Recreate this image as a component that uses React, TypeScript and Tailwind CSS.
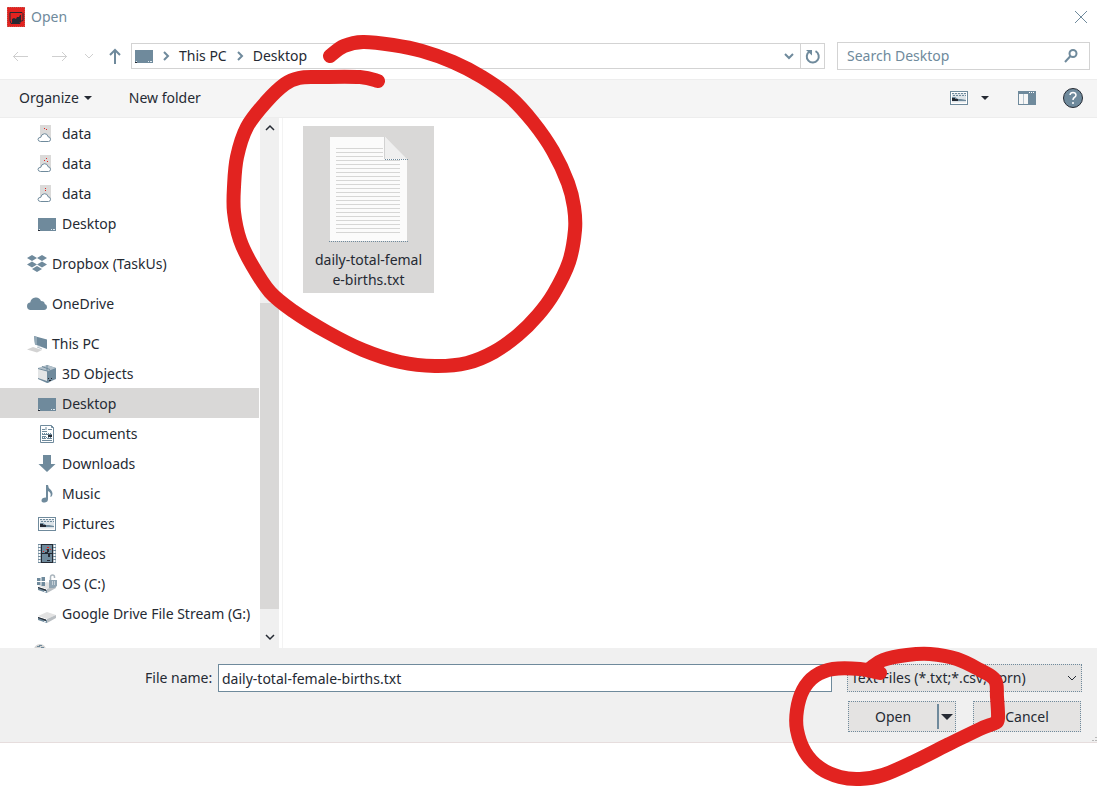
import type { ReactNode } from "react";

const BLUE = "#6f8a9c";
const INK = "#252a33";
const RED = "#e22320";

type Point = [number, number];

function smooth(points: Point[]) {
  let d = `M${points[0][0]} ${points[0][1]}`;
  for (let i = 0; i < points.length - 1; i++) {
    const p0 = points[i - 1] ?? points[i];
    const p1 = points[i];
    const p2 = points[i + 1];
    const p3 = points[i + 2] ?? p2;
    d += `C${p1[0] + (p2[0] - p0[0]) / 6} ${p1[1] + (p2[1] - p0[1]) / 6} ${p2[0] - (p3[0] - p1[0]) / 6} ${p2[1] - (p3[1] - p1[1]) / 6} ${p2[0]} ${p2[1]}`;
  }
  return d;
}

const fileCircle: Point[] = [
  [330, 56], [344, 46], [363, 42], [393, 45], [422, 51], [453, 62], [482, 77], [510, 97], [533, 122],
  [553, 151], [568, 183], [574, 207], [575, 230], [569, 262], [554, 293], [538, 315], [518, 335],
  [494, 352], [467, 363], [435, 366], [400, 362], [363, 350], [327, 332], [293, 311], [270, 292],
  [252, 265], [240, 240], [234, 212], [234, 187], [237, 157], [247, 127], [266, 102], [285, 84],
  [299, 78], [317, 77], [360, 77], [378, 81],
];

const openCircle: Point[] = [
  [880, 673], [860, 669], [833, 669], [815, 676], [803, 690], [797, 710], [797, 730], [805, 752],
  [820, 768], [840, 777], [860, 779], [883, 775], [913, 762], [947, 745], [980, 729], [995, 723],
  [998, 718], [997, 697], [995, 680], [980, 670], [957, 659], [930, 654], [907, 655], [883, 660],
  [872, 667],
];

function Icon({ w = 20, h = 20, children }: { w?: number; h?: number; children: ReactNode }) {
  return (
    <svg width={w} height={h} viewBox={`0 0 ${w} ${h}`} fill="none" aria-hidden="true" className="shrink-0 overflow-visible">
      {children}
    </svg>
  );
}

function AppIcon() {
  return (
    <Icon>
      <rect x="1" y="0" width="18" height="20" fill={RED} />
      <path d="M1 .5h18M1 19.500h18M1.500 0v20M18.500 0v20" stroke="#c9564f" strokeDasharray="1 1" />
      <path d="M4 5.500h12l1 1v7l-3 1v2H5l-1-3z" stroke={INK} />
      <path d="M6 15v-3l2-1 2 1 1-2h2l1-2h1v6l-2 2H6z" fill={INK} />
    </Icon>
  );
}

function DesktopIcon() {
  return (
    <Icon>
      <rect x="1" y="4" width="18" height="13" fill={BLUE} />
      <path d="M1 16.500h2" stroke={INK} />
      <path d="M2 15.500h1M14 15.500h1M16 15.500h2" stroke="#dfe8ee" />
    </Icon>
  );
}

function DataIcon({ variant }: { variant: number }) {
  const dots = ["M7 4.500h1M9 5.500h1", "M9 4.500h1M7 6.500h1M10 7.500h1", "M8 4.500h1M8 6.500h1"][variant];
  return (
    <Icon>
      <rect x="3" y="1" width="11" height="15" fill="#dbdad9" />
      <path d={dots} stroke={RED} />
      <path d="M3.500 17.500Q1 17.300 1 15.300 1 13.500 3.800 13.300 4.300 10 7.500 9.700 10.500 9.600 11 12.700 13.500 13 13.500 15.300 13.500 17.500 11.500 17.500z" fill="#fff" stroke={BLUE} />
    </Icon>
  );
}

function DropboxIcon() {
  return (
    <Icon>
      <path d="M0 4l5-3 5 3-5 3zM10 4l5-3 5 3-5 3zM0 10.500l5-3 5 3-5 3zM10 10.500l5-3 5 3-5 3zM5 15l5-3 5 3-5 3z" fill={BLUE} />
    </Icon>
  );
}

function OneDriveIcon() {
  return (
    <Icon>
      <path d="M3 16q-3-.6-3-4 .2-3.200 3.200-3.500Q4 4 8.500 3.500q4-.3 5.500 3.500 3.500 0 3.800 3 2.200.6 2.200 3 0 2.600-3 3z" fill={BLUE} />
    </Icon>
  );
}

function ThisPcIcon() {
  return (
    <Icon>
      <path d="M7 2l13 3.500V15L8 10.500z" fill={BLUE} />
      <path d="M7 2l3 1v8l-2-1z" fill="#93a8b6" />
      <path d="M0 15.500l6-2.500 9 3-5 2.500z" fill="#d3d3d3" />
      <path d="M10 13l5 2M12 11.500v2" stroke="#b4c0c9" />
    </Icon>
  );
}

function ObjectsIcon() {
  return (
    <Icon>
      <path d="M1 4l9-3v17l-9-3z" fill="#e3e5e6" />
      <path d="M10 1l9 3v11l-9 4z" fill={BLUE} />
      <path d="M1 4l9-3 9 3-8 3z" fill="#b3c1cb" />
      <path d="M1 4.500l9 2.500M10 1v6M5 2.500l8 3" stroke={BLUE} />
      <path d="M1 15l9 4 3-1v-2l-3 1-9-3z" fill={BLUE} />
      <path d="M11 14.500h1M12 16.500h2M14 14.500h1" stroke={INK} />
    </Icon>
  );
}

function DocumentsIcon() {
  return (
    <Icon>
      <path d="M3.500 1.500h11l2 2v15h-13z" fill="#fff" stroke={BLUE} />
      <path d="M14.500 1.500v2h2M5 7.500h5M5 5.500h3M9 3v3M11 5.500h4M5 16.500h10M5 14.500h4M10 14.500h5M5 12.500h4M5 10.500h10" stroke={BLUE} />
      <path d="M5 9.500h10M5 13.500h10" stroke={BLUE} strokeDasharray="1 1" />
      <path d="M11 12h4" stroke={INK} strokeWidth="2" />
    </Icon>
  );
}

function DownloadsIcon() {
  return (
    <Icon>
      <path d="M6 1h8v9h4.500L10 18 1.500 10H6z" fill={BLUE} />
    </Icon>
  );
}

function MusicIcon() {
  return (
    <Icon>
      <path d="M9 1h2q0 3 3 5 3 4 0 7-1 0-.5-1 1-3-2.500-5v8q0 3-3 3.500-3.500.3-3.500-2 0-3 4.500-3z" fill={BLUE} />
    </Icon>
  );
}

function PicturesIcon() {
  return (
    <Icon>
      <rect x="1.500" y="3.500" width="17" height="13" fill="#fff" stroke={BLUE} />
      <rect x="3" y="5" width="14" height="10" fill="#dde4e9" />
      <path d="M3 5.500h14M4 7.500h13" stroke={BLUE} strokeDasharray="2 1" />
      <path d="M3 9h3l3 2h3l5 1v1H3z" fill={BLUE} />
      <path d="M3 10h3v1h3v2H3z" fill={INK} />
      <path d="M3 14h14v1H3z" fill="#f1f1f1" />
    </Icon>
  );
}

function VideosIcon() {
  return (
    <Icon>
      <rect x="1" y="0" width="18" height="19" fill={BLUE} />
      <path d="M2.500 1v17M17.500 1v17" stroke="#fff" strokeWidth="2" strokeDasharray="2 1" />
      <rect x="4.500" y=".5" width="11" height="18" fill={BLUE} stroke={INK} />
      <path d="M5 9h10v1H5zM10 5h2v3h-2zM11 10h2v3h-2zM10 16h3v1h-3zM8 8h3v1H8z" fill={INK} />
      <path d="M10 3.500h2M9 5.500h1M13 5.500h1M6 7.500h1" stroke={RED} />
    </Icon>
  );
}

function Drive() {
  return (
    <g transform="translate(0 1)">
      <path d="M1 11l9-4 9 3-9 4z" fill="#e2e2e2" />
      <path d="M10 14l9-4v3l-9 5z" fill="#b9bec2" />
      <path d="M1 12l9 3V18l-9-3z" fill={BLUE} />
      <path d="M1 12l8 2.500v1.500l-8-3z" fill={INK} />
      <path d="M7 16.500h2" stroke="#dfe8ee" />
    </g>
  );
}

function OsDriveIcon() {
  return (
    <Icon>
      <Drive />
      <path d="M0 4h3.500v3H0zM4.500 3H8v4H4.500zM0 8h3.500v3H0zM4.500 8H8v4H4.500z" fill={BLUE} />
      <path d="M13.500 6V3q.2-2 2-2 2 0 2 2v1" stroke="#aab5bd" strokeWidth="1.500" />
      <path d="M12 6h8v6l-3 2h-5z" fill="#90a4b2" />
      <path d="M15 8h3M15 10h3" stroke="#fff" strokeDasharray="1 1" />
    </Icon>
  );
}

function DriveIcon() {
  return (
    <Icon>
      <Drive />
    </Icon>
  );
}

function NetworkDriveIcon() {
  return (
    <Icon>
      <circle cx="3" cy="16" r="6" fill="#d3d3d3" />
      <path d="M0 12.500h3M2 11.500h3M4 13.500h3" stroke={BLUE} />
    </Icon>
  );
}

function Chevron({ dir, color = INK, w = 2 }: { dir: "up" | "down" | "right"; color?: string; w?: number }) {
  const d = { up: "M2 8l4-4 4 4", down: "M2 4l4 4 4-4", right: "M4 2l4 4-4 4" }[dir];
  return (
    <Icon w={12} h={12}>
      <path d={d} stroke={color} strokeWidth={w} />
    </Icon>
  );
}

function Caret() {
  return (
    <Icon w={12} h={12}>
      <path d="M2 4h8L6 8z" fill={INK} />
    </Icon>
  );
}

function TextFileIcon() {
  const lines = Array.from({ length: 22 }, (_, i) => 12 + i * 4);
  return (
    <Icon w={79} h={106}>
      <path d="M1 1h55l22 23v81H1z" fill="#fbfbfb" />
      {lines.map((y) => (
        <path key={y} d={`M7 ${y + 0.5}H${y < 24 ? 54 : 71}`} stroke="#d6d6d5" />
      ))}
      <path d="M56 1l22 22H56z" fill="#efefef" />
      <path d="M55.500 1v22" stroke="#d2d2d2" />
      <path d="M56 23.500h23M0 105.500h79" stroke={BLUE} strokeDasharray="1 1" />
    </Icon>
  );
}

type Entry = { label: string; icon: ReactNode; selected?: boolean };

const quickAccess: Entry[] = [
  { label: "data", icon: <DataIcon variant={0} /> },
  { label: "data", icon: <DataIcon variant={1} /> },
  { label: "data", icon: <DataIcon variant={2} /> },
  { label: "Desktop", icon: <DesktopIcon /> },
];

const pcEntries: Entry[] = [
  { label: "3D Objects", icon: <ObjectsIcon /> },
  { label: "Desktop", icon: <DesktopIcon />, selected: true },
  { label: "Documents", icon: <DocumentsIcon /> },
  { label: "Downloads", icon: <DownloadsIcon /> },
  { label: "Music", icon: <MusicIcon /> },
  { label: "Pictures", icon: <PicturesIcon /> },
  { label: "Videos", icon: <VideosIcon /> },
  { label: "OS (C:)", icon: <OsDriveIcon /> },
  { label: "Google Drive File Stream (G:)", icon: <DriveIcon /> },
  { label: "", icon: <NetworkDriveIcon /> },
];

function TreeRow({ entry, nested = false }: { entry: Entry; nested?: boolean }) {
  return (
    <li>
      <button
        type="button"
        aria-label={entry.label || "Network drive"}
        className={`flex h-[30px] w-full items-center gap-[5px] whitespace-nowrap pt-px text-left ${nested ? "pl-[37px]" : "pl-[27px]"} ${entry.selected ? "bg-[#d9d8d7]" : ""}`}
      >
        {entry.icon}
        {entry.label}
      </button>
    </li>
  );
}

function TitleBar() {
  return (
    <header className="flex h-[34px] items-center gap-[5px] pb-px pl-[6px] pr-2 text-[#6f8a9c]">
      <AppIcon />
      <h1 className="flex-1">Open</h1>
      <button type="button" aria-label="Close">
        <Icon w={16} h={16}>
          <path d="M2 2l12 12M14 2L2 14" stroke={BLUE} />
        </Icon>
      </button>
    </header>
  );
}

function AddressRow() {
  return (
    <div className="flex h-[45px] items-center pb-px pl-3 pr-[7px]">
      <nav className="flex items-center" aria-label="History">
        <button type="button" aria-label="Back">
          <Icon w={18} h={16}>
            <path d="M1 8.500h15M6 4L1.500 8.500 6 13" stroke="#cfcfcf" />
          </Icon>
        </button>
        <button type="button" aria-label="Forward" className="ml-[22px]">
          <Icon w={18} h={16}>
            <path d="M0 8.500h15M10 4l4.500 4.500L10 13" stroke="#cfcfcf" />
          </Icon>
        </button>
        <button type="button" aria-label="Recent locations" className="ml-[13px]">
          <Chevron dir="down" color="#cfcfcf" w={1} />
        </button>
        <button type="button" aria-label="Up" className="ml-3">
          <Icon w={16} h={16}>
            <path d="M8 16V2M3 7l5-5 5 5" stroke={BLUE} strokeWidth="2" />
          </Icon>
        </button>
      </nav>
      <div className="ml-2 flex h-[26px] flex-1 items-center border border-[#d3d3d3] pl-[2px]">
        <DesktopIcon />
        <span className="ml-[6px]"><Chevron dir="right" color={BLUE} /></span>
        <button type="button" className="ml-[7px]">This PC</button>
        <span className="ml-[7px]"><Chevron dir="right" color={BLUE} /></span>
        <button type="button" className="ml-[7px]">Desktop</button>
        <button type="button" aria-label="Previous locations" className="ml-auto mr-[5px]">
          <Chevron dir="down" color={BLUE} />
        </button>
        <button type="button" aria-label="Refresh" className="flex h-full w-6 items-center justify-center border-l border-[#d3d3d3]">
          <Icon w={16} h={16}>
            <path d="M10.500 3.200A6 6 0 1 1 4.500 3.500" stroke={BLUE} strokeWidth="2" />
            <path d="M1 2h6v5.500z" fill={BLUE} />
          </Icon>
        </button>
      </div>
      <label className="ml-3 flex h-7 w-[253px] items-center border border-[#d3d3d3] pl-[9px] pr-[10px]">
        <input
          type="search"
          aria-label="Search Desktop"
          placeholder="Search Desktop"
          className="min-w-0 flex-1 bg-transparent outline-none placeholder:text-[#6f8a9c]"
        />
        <Icon w={16} h={16}>
          <circle cx="10" cy="5.500" r="3.500" stroke={BLUE} strokeWidth="2" />
          <path d="M7.500 8L2 14" stroke={BLUE} strokeWidth="2" />
        </Icon>
      </label>
    </div>
  );
}

function Toolbar() {
  return (
    <div className="flex h-[39px] items-center border-y border-[#ededed] bg-[#f5f5f5] pb-px pl-[19px] pr-[13px]">
      <button type="button" className="flex items-center gap-[3px]">
        Organize <Caret />
      </button>
      <button type="button" className="ml-[35px]">New folder</button>
      <button type="button" aria-label="Change view" className="ml-auto flex items-center gap-[10px]">
        <PicturesIcon />
        <Caret />
      </button>
      <button type="button" aria-label="Preview pane" className="ml-[26px]">
        <Icon>
          <path d="M1 3h18v14H1z" fill={BLUE} />
          <path d="M2 6h9v10H2z" fill="#f7f7f7" />
          <path d="M6.500 6v10" stroke="#b8c5ce" />
          <path d="M12 4.500h6" stroke="#fff" strokeDasharray="1 1" />
        </Icon>
      </button>
      <button type="button" aria-label="Help" className="ml-[25px]">
        <Icon w={22} h={22}>
          <circle cx="11" cy="11" r="9.500" fill={BLUE} stroke={INK} />
          <path d="M8 8q.3-2.500 3-2.500t3 2.500q0 1.500-1.700 2.500-1.300.8-1.300 2.500M11 15v2" stroke="#fff" strokeWidth="1.500" />
        </Icon>
      </button>
    </div>
  );
}

function Sidebar() {
  return (
    <aside className="flex w-[279px] shrink-0">
      <nav aria-label="Folders" className="flex flex-1 flex-col gap-[10px] overflow-hidden">
        <ul>
          {quickAccess.map((entry, i) => (
            <TreeRow key={i} entry={entry} nested />
          ))}
        </ul>
        <ul>
          <TreeRow entry={{ label: "Dropbox (TaskUs)", icon: <DropboxIcon /> }} />
        </ul>
        <ul>
          <TreeRow entry={{ label: "OneDrive", icon: <OneDriveIcon /> }} />
        </ul>
        <ul>
          <TreeRow entry={{ label: "This PC", icon: <ThisPcIcon /> }} />
          {pcEntries.map((entry, i) => (
            <TreeRow key={i} entry={entry} nested />
          ))}
        </ul>
      </nav>
      <div className="ml-px flex w-[19px] flex-col items-center bg-[#f0f0f0]">
        <button type="button" aria-label="Scroll up" className="flex h-5 items-center"><Chevron dir="up" w={1.5} /></button>
        <div className="mt-[165px] h-[306px] w-full bg-[#d9d8d7]" />
        <button type="button" aria-label="Scroll down" className="mb-[5px] mt-auto"><Chevron dir="down" w={1.5} /></button>
      </div>
    </aside>
  );
}

function Footer() {
  return (
    <footer className="flex flex-col gap-[9px] border-b border-[#e6dddd] bg-[#f0f0f0] pb-[10px] pl-[145px] pr-[15px] pt-4">
      <div className="flex items-center">
        <label htmlFor="file-name" className="w-[73px] whitespace-nowrap">File name:</label>
        <input
          id="file-name"
          defaultValue="daily-total-female-births.txt"
          className="h-7 min-w-0 flex-1 border border-[#6f8a9c] bg-white px-[3px] outline-none"
        />
        <div className="ml-[15px] grid w-[235px] items-center">
          <select
            aria-label="File type"
            className="col-start-1 row-start-1 h-7 appearance-none border border-dotted border-[#6f8a9c] bg-[#e4e3e2] px-[3px] outline-none"
          >
            <option>Text Files (*.txt;*.csv;*.prn)</option>
          </select>
          <span className="pointer-events-none col-start-1 row-start-1 mr-1 justify-self-end">
            <Chevron dir="down" w={1} />
          </span>
        </div>
      </div>
      <div className="flex justify-end gap-[17px] pr-px">
        <div className="flex h-[31px] w-[108px] items-center border border-dotted border-[#6f8a9c] bg-[#e4e3e2]">
          <button type="button" className="flex-1">Open</button>
          <button type="button" aria-label="Open options" className="flex h-[25px] w-[18px] items-center justify-center border-l-2 border-[#6f8a9c]">
            <Icon w={12} h={12}>
              <path d="M0 3h12L6 9z" fill={INK} />
            </Icon>
          </button>
        </div>
        <button type="button" className="h-[31px] w-[108px] border border-dotted border-[#6f8a9c] bg-[#e4e3e2]">
          Cancel
        </button>
      </div>
    </footer>
  );
}

export default function App() {
  return (
    <div className="relative min-h-screen overflow-hidden bg-white font-['Noto_Sans','Open_Sans',sans-serif] text-[14px] leading-5 text-[#252a33]">
      <TitleBar />
      <AddressRow />
      <Toolbar />
      <main className="flex h-[530px]">
        <Sidebar />
        <section aria-label="Files" className="ml-[3px] flex-1 border-l border-[#f3f3f3] pl-5 pt-2">
          <button type="button" className="flex w-[131px] flex-col items-center bg-[#d9d8d7] pb-[3px] pt-[10px]">
            <TextFileIcon />
            <span className="mt-2 text-center">
              daily-total-femal
              <br />
              e-births.txt
            </span>
          </button>
        </section>
      </main>
      <Footer />
      <svg
        width="1097"
        height="787"
        viewBox="0 0 1097 787"
        fill="none"
        className="pointer-events-none absolute left-0 top-0"
        aria-hidden="true"
      >
        <path d="M1092 740.500h2M1095 740.500h2M1095 737.500h2" stroke="#b9b9b9" strokeWidth="1" />
        <g stroke={RED} strokeWidth="14" strokeLinecap="round" strokeLinejoin="round">
          <path d={smooth(fileCircle)} />
          <path d={smooth(openCircle)} />
        </g>
      </svg>
    </div>
  );
}
